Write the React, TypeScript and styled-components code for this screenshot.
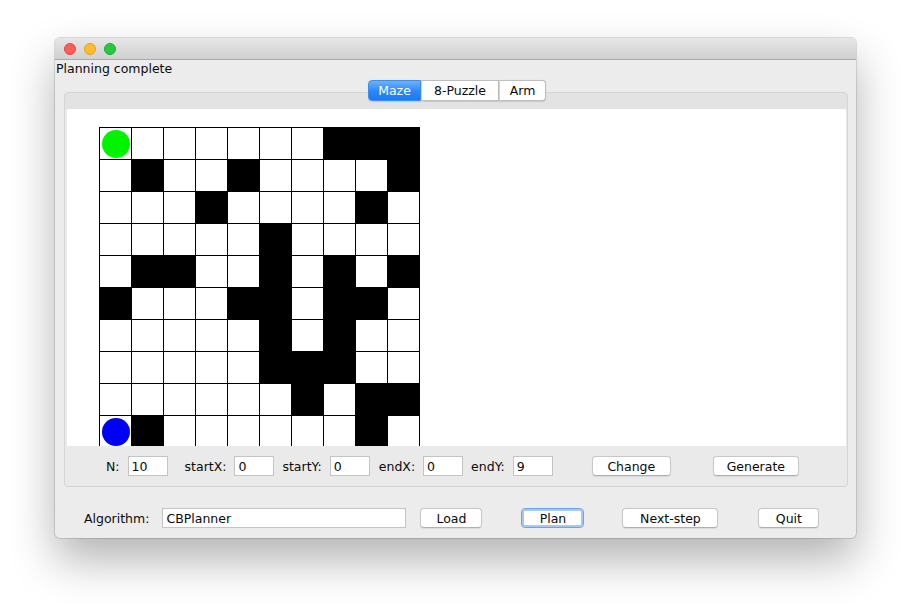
import React, {FC} from 'react';
import styled, {createGlobalStyle} from 'styled-components';

const MAZE = [
  'S......###',
  '.#..#....#',
  '...#....#.',
  '.....#....',
  '.##..#.#.#',
  '#...##.##.',
  '.....#.#..',
  '.....###..',
  '......#.##',
  'G#......#.',
];

const GlobalStyle = createGlobalStyle`
  html, body {
    margin: 0;
    padding: 0;
    background: #fff;
  }
  body {
    font-family: "DejaVu Sans", "Liberation Sans", sans-serif;
    font-size: 12.5px;
    color: #0a0a0a;
  }
`;

const Page = styled.div`
  box-sizing: border-box;
  height: 612px;
  padding: 38px 0 0 55px;
`;

const Window = styled.div`
  width: 801px;
  height: 500px;
  display: flex;
  flex-direction: column;
  background: #ececec;
  border-radius: 5px;
  overflow: hidden;
  box-shadow: 0 0 0 1px rgba(0, 0, 0, 0.12), 0 22px 45px rgba(0, 0, 0, 0.3);
`;

const TitleBar = styled.div`
  height: 21px;
  display: flex;
  align-items: center;
  gap: 8px;
  padding-left: 9px;
  background: linear-gradient(#e6e6e6, #d0d0d0);
  border-bottom: 1px solid #a9a9a9;
`;

const Light = styled.span<{$fill: string; $edge: string}>`
  width: 12px;
  height: 12px;
  box-sizing: border-box;
  border-radius: 50%;
  background: ${p => p.$fill};
  border: 0.5px solid ${p => p.$edge};
`;

const Status = styled.div`
  height: 17px;
  line-height: 17px;
  padding-left: 1px;
`;

const TabArea = styled.div`
  margin: 3px 8px 0 9px;
`;

const TabStrip = styled.div`
  display: flex;
  justify-content: center;
  position: relative;
  z-index: 1;
  height: 21px;
  margin-bottom: -9px;
  padding-left: 2px;
`;

const Tab = styled.div<{$w: number; $active?: boolean}>`
  width: ${p => p.$w}px;
  height: 21px;
  box-sizing: border-box;
  display: flex;
  align-items: center;
  justify-content: center;
  border: 1px solid #bdbdbd;
  border-left: 1px solid #d4d4d4;
  background: ${p => (p.$active ? 'linear-gradient(#6db3fb, #2a87f9 55%, #1b7af4)' : '#fff')};
  color: ${p => (p.$active ? '#fff' : '#0a0a0a')};
  box-shadow: 0 0.5px 1px rgba(0, 0, 0, 0.12);

  &:first-child {
    border-left: 1px solid #bdbdbd;
    border-radius: 4px 0 0 4px;
  }
  &:last-child {
    border-radius: 0 4px 4px 0;
  }
  ${p => (p.$active ? 'border-color: #3d8ef2 !important;' : '')}
`;

const Panel = styled.div`
  border: 1px solid #d5d5d5;
  border-radius: 4px;
  background: linear-gradient(#e3e3e3 17px, #eaeaea 17px);
  padding: 16px 1px 0 2px;
`;

const Canvas = styled.div`
  height: 337px;
  box-sizing: border-box;
  overflow: hidden;
  background: #fff;
  padding: 18px 0 0 32px;
`;

const Grid = styled.div`
  display: grid;
  grid-template-columns: repeat(10, 31px);
  grid-auto-rows: 31px;
  gap: 1px;
  padding: 1px;
  width: fit-content;
  background: #000;
`;

const Cell = styled.div<{$wall: boolean}>`
  background: ${p => (p.$wall ? '#000' : '#fff')};
  display: flex;
  align-items: center;
  justify-content: center;
`;

const Dot = styled.span<{$color: string}>`
  width: 28px;
  height: 28px;
  border-radius: 50%;
  background: ${p => p.$color};
`;

const ControlsRow = styled.div`
  height: 40px;
  display: flex;
  align-items: center;
  padding-left: 39px;
`;

const Field = styled.div<{$space?: number}>`
  display: flex;
  align-items: center;
  gap: 8px;
  margin-left: ${p => p.$space ?? 0}px;
`;

const Input = styled.input<{$w: number; $space?: number}>`
  width: ${p => p.$w}px;
  height: 20px;
  box-sizing: border-box;
  margin: 0 0 0 ${p => p.$space ?? 0}px;
  padding: 0 3px;
  border: 1px solid #c4c4c4;
  background: #fff;
  font: inherit;
  color: #0a0a0a;
  outline: none;
`;

const Button = styled.button<{$w: number; $space: number; $focus?: boolean}>`
  width: ${p => p.$w}px;
  height: 20px;
  margin: 0 0 0 ${p => p.$space}px;
  padding: 0;
  box-sizing: border-box;
  font: inherit;
  color: #0a0a0a;
  background: #fff;
  border: 1px solid ${p => (p.$focus ? '#6fa3e6' : '#c8c8c8')};
  border-bottom-color: ${p => (p.$focus ? '#6fa3e6' : '#b0b0b0')};
  border-radius: 4px;
  box-shadow: ${p =>
    p.$focus ? 'inset 0 0 0 2px #a9c8f1' : '0 0.5px 1px rgba(0, 0, 0, 0.08)'};
`;

const BottomRow = styled.div`
  display: flex;
  align-items: center;
  height: 20px;
  margin-top: 21px;
  padding-left: 29px;
`;

const Maze: FC = () => (
  <Grid>
    {MAZE.flatMap((row, y) =>
      row.split('').map((c, x) => (
        <Cell key={`${x}-${y}`} $wall={c === '#'}>
          {c === 'S' && <Dot $color="#00f400" />}
          {c === 'G' && <Dot $color="#0000f4" />}
        </Cell>
      )),
    )}
  </Grid>
);

export default function App() {
  return (
    <Page>
      <GlobalStyle />
      <Window>
        <TitleBar>
          <Light $fill="#fe5f57" $edge="#e2463f" />
          <Light $fill="#febc2e" $edge="#dfa023" />
          <Light $fill="#28c840" $edge="#1dad2b" />
        </TitleBar>
        <Status>Planning complete</Status>
        <TabArea>
          <TabStrip>
            <Tab $w={53} $active>
              Maze
            </Tab>
            <Tab $w={78}>8-Puzzle</Tab>
            <Tab $w={47}>Arm</Tab>
          </TabStrip>
          <Panel>
            <Canvas>
              <Maze />
            </Canvas>
            <ControlsRow>
              <Field>
                <span>N:</span>
                <Input $w={40} defaultValue="10" />
              </Field>
              <Field $space={17}>
                <span>startX:</span>
                <Input $w={40} defaultValue="0" />
              </Field>
              <Field $space={8}>
                <span>startY:</span>
                <Input $w={40} defaultValue="0" />
              </Field>
              <Field $space={9}>
                <span>endX:</span>
                <Input $w={40} defaultValue="0" />
              </Field>
              <Field $space={8}>
                <span>endY:</span>
                <Input $w={40} defaultValue="9" />
              </Field>
              <Button $w={79} $space={39}>
                Change
              </Button>
              <Button $w={86} $space={42}>
                Generate
              </Button>
            </ControlsRow>
          </Panel>
        </TabArea>
        <BottomRow>
          <span>Algorithm:</span>
          <Input $w={244} $space={13} defaultValue="CBPlanner" />
          <Button $w={62} $space={14}>
            Load
          </Button>
          <Button $w={63} $space={39} $focus>
            Plan
          </Button>
          <Button $w={96} $space={38}>
            Next-step
          </Button>
          <Button $w={61} $space={40}>
            Quit
          </Button>
        </BottomRow>
      </Window>
    </Page>
  );
}
